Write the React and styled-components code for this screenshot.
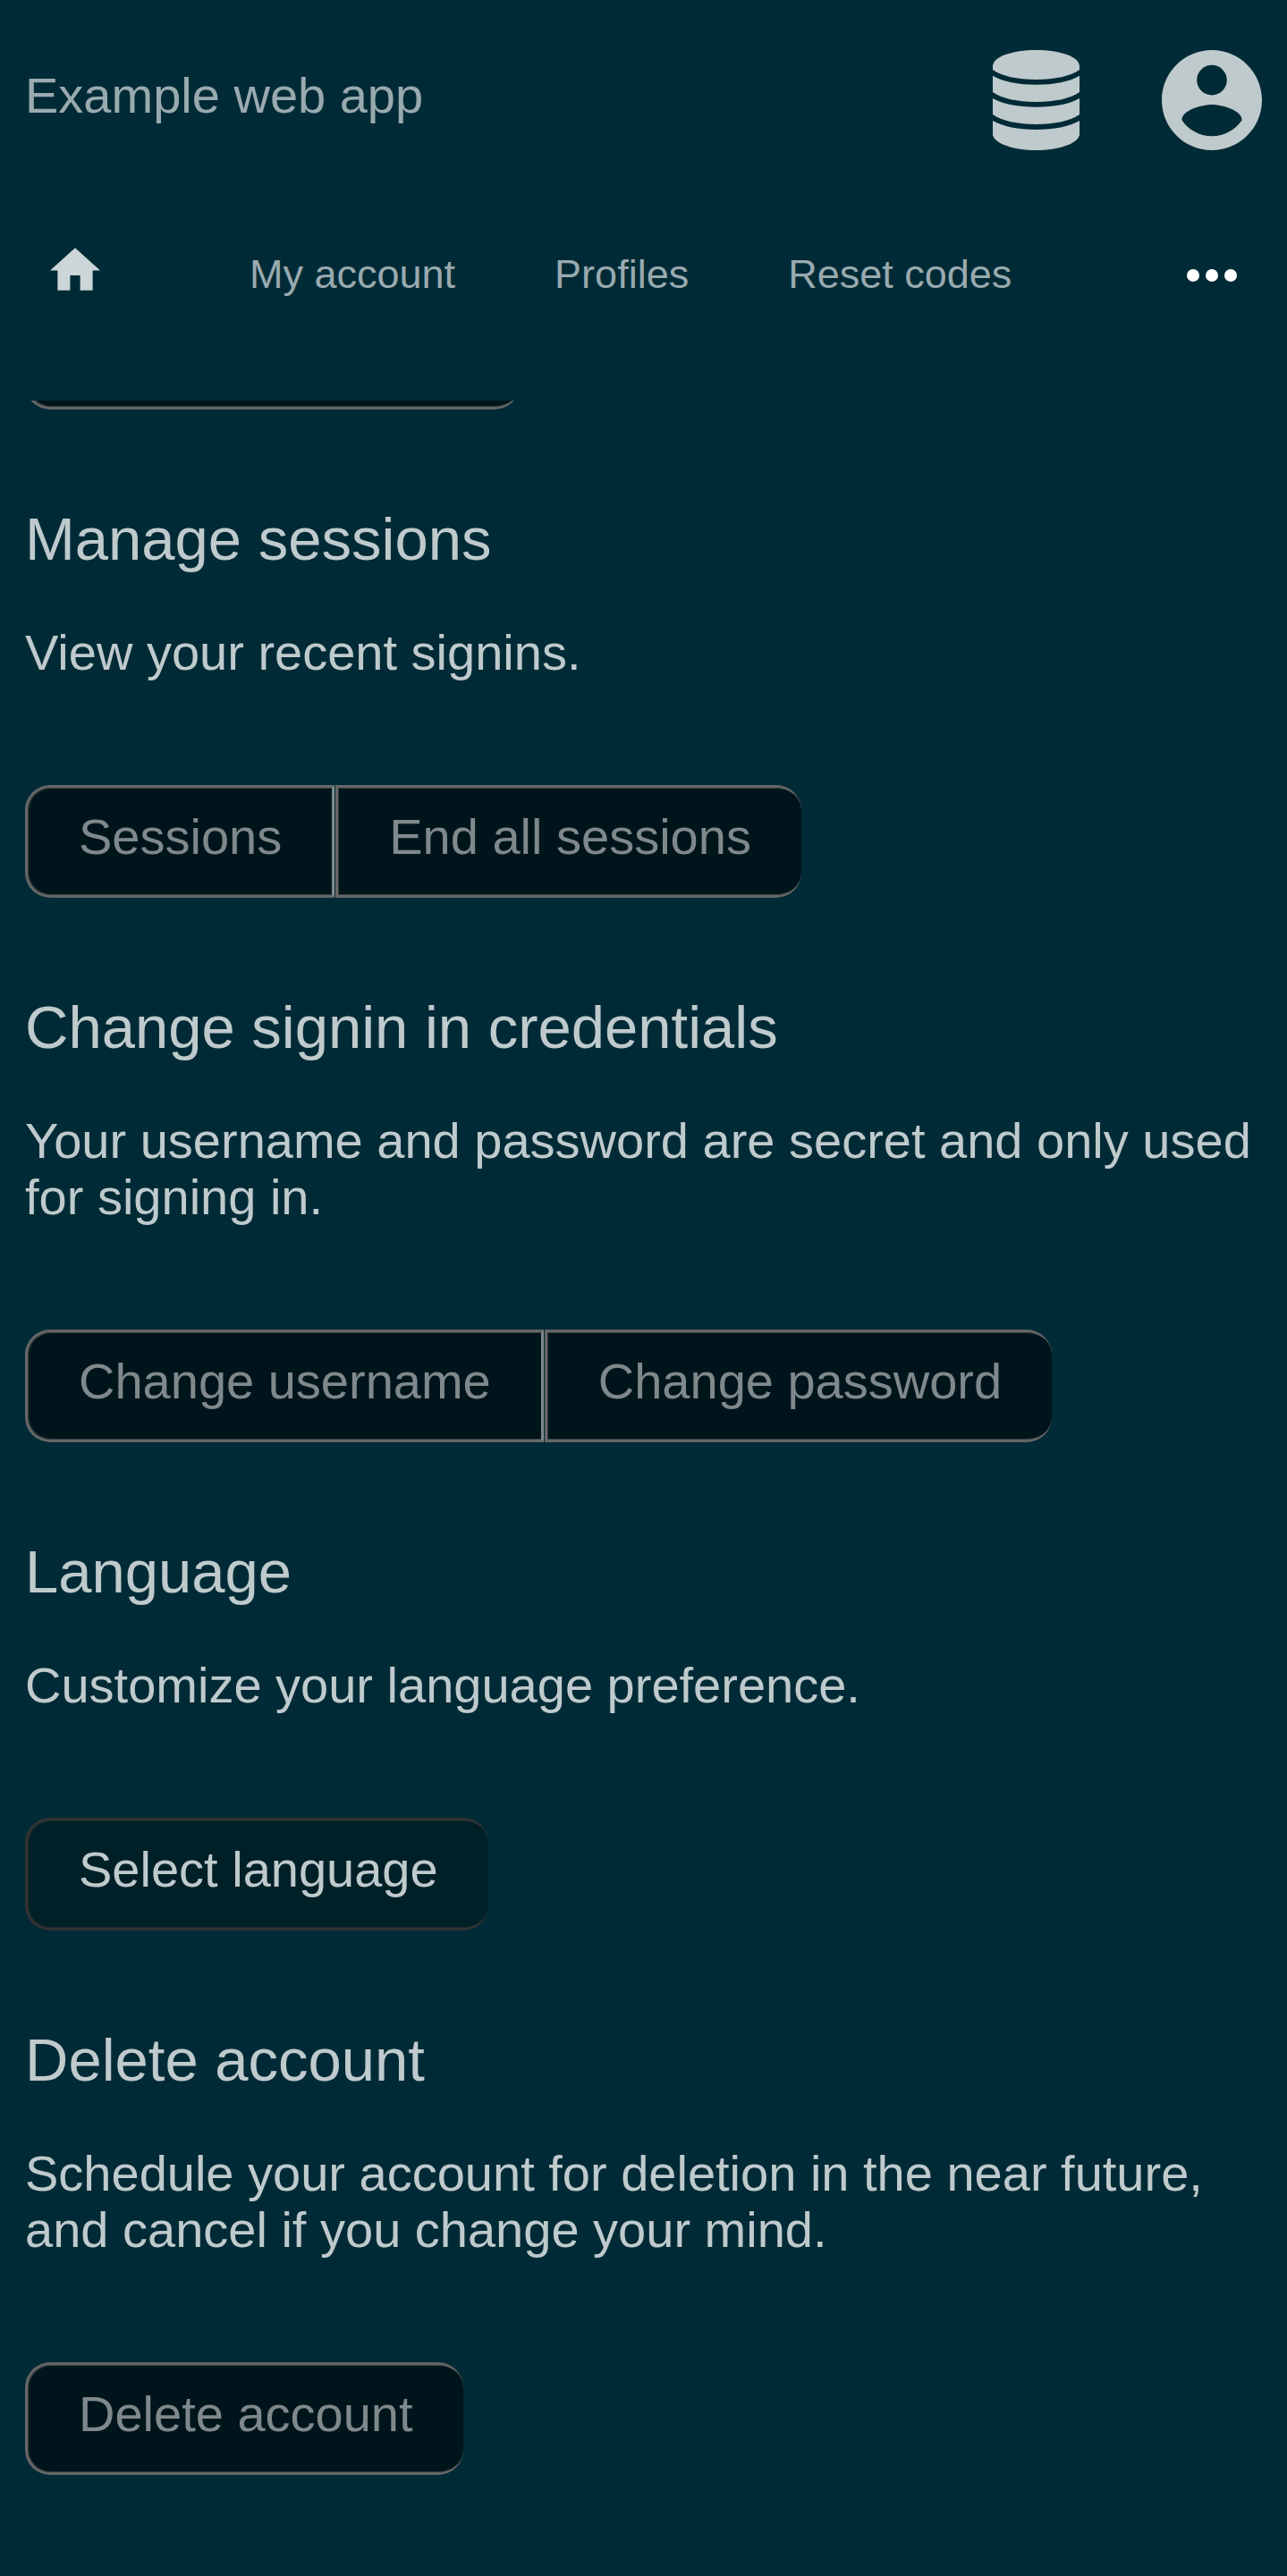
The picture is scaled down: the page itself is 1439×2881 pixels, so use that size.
import React from "react";
import styled, { createGlobalStyle } from "styled-components";

const GlobalStyle = createGlobalStyle`
  *, *::before, *::after { box-sizing: border-box; }
  body {
    margin: 0;
    background: #002b36;
    color: #bfcacd;
    font-family: "Liberation Sans", Arial, sans-serif;
    font-size: 56px;
    line-height: 63px;
  }
`;

const Page = styled.div`
  display: flex;
  flex-direction: column;
  padding-bottom: 113px;
`;

const Header = styled.header`
  display: flex;
  align-items: center;
  justify-content: space-between;
  padding: 56px 28px;
`;

const Brand = styled.a`
  color: #99aaaf;
  text-decoration: none;
  padding-bottom: 12px;
`;

const Actions = styled.div`
  display: flex;
  gap: 92px;
`;

const IconButton = styled.button`
  display: flex;
  padding: 0;
  border: 0;
  background: none;
  color: ${(p) => p.$color || "#bfcacd"};
  cursor: pointer;
`;

const Nav = styled.nav`
  display: flex;
  align-items: center;
  justify-content: space-between;
  height: 168px;
  padding: 0 56px;
  font-size: 45px;
`;

const NavItems = styled.div`
  display: flex;
  align-items: center;
  gap: 111px;
`;

const HomeLink = styled.a`
  display: flex;
  margin-right: 56px;
  padding-bottom: 14px;
  color: #ccd5d7;
`;

const NavLink = styled.a`
  padding-bottom: 3px;
  color: #99aaaf;
  text-decoration: none;
  white-space: nowrap;
`;

const Main = styled.main`
  margin-top: 56px;
  padding: 0 28px;
`;

const ScrolledRow = styled.div`
  display: flex;
  align-items: flex-end;
  height: 10px;
  overflow: hidden;
`;

const Section = styled.section`
  padding-top: 107px;
`;

const Title = styled.h2`
  margin: 0 0 57px;
  font-size: 67px;
  line-height: 76px;
  font-weight: 400;
`;

const Text = styled.p`
  margin: 0 0 117px;
`;

const ButtonGroup = styled.div`
  display: flex;
  gap: 1px;
`;

const Button = styled.button`
  flex: none;
  min-width: ${(p) => (p.$wide ? "553px" : "0")};
  height: 126px;
  padding: 23px 56px 34px 57px;
  border: 3px solid ${(p) => (p.disabled ? "#666666" : "#333333")};
  border-right: 0;
  border-radius: 0;
  background: ${(p) => (p.disabled ? "#00151b" : "#002028")};
  box-shadow: inset 1px 1px 0 ${(p) => (p.disabled ? "#333e41" : "#1a2a2e")},
    inset 1px -1px 0 ${(p) => (p.disabled ? "#333e41" : "#1a2a2e")};
  color: ${(p) => (p.disabled ? "#7f898c" : "#bfcacd")};
  font: inherit;
  white-space: nowrap;

  &:first-child {
    border-top-left-radius: 28px;
    border-bottom-left-radius: 28px;
  }
  &:last-child {
    border-top-right-radius: 28px;
    border-bottom-right-radius: 28px;
  }
  &:not(:last-child) {
    border-right: 3px solid #7f898c;
  }
`;

const DatabaseIcon = () => (
  <svg width="97" height="112" viewBox="0 0 291 336" fill="currentColor" aria-hidden="true">
    <path d="M0 55C0 22 65 0 145.500 0S291 22 291 55V66C262 87 208 99 145.500 99S29 87 0 66Z" />
    <path d="M0 86C34 106 85 116 145.500 116S257 106 291 86V141C262 162 208 174 145.500 174S29 162 0 141Z" />
    <path d="M0 162C34 182 85 191 145.500 191S257 182 291 162V216C262 237 208 249 145.500 249S29 237 0 216Z" />
    <path d="M0 237C34 257 85 267 145.500 267S257 257 291 237V285C284 314 222 336 145.500 336S7 314 0 285Z" />
  </svg>
);

const AccountIcon = () => (
  <svg width="112" height="112" viewBox="2 2 20 20" fill="currentColor" aria-hidden="true">
    <path d="M12 2C6.480 2 2 6.480 2 12s4.480 10 10 10 10-4.480 10-10S17.520 2 12 2zm0 3c1.660 0 3 1.340 3 3s-1.340 3-3 3-3-1.340-3-3 1.340-3 3-3zm0 14.200c-2.500 0-4.710-1.280-6-3.220.030-1.990 4-3.080 6-3.080 1.990 0 5.970 1.090 6 3.080-1.290 1.940-3.500 3.220-6 3.220z" />
  </svg>
);

const HomeIcon = () => (
  <svg width="56" height="48" viewBox="2 3 20 17" fill="currentColor" aria-hidden="true">
    <path d="M10 20v-6h4v6h5v-8h3L12 3 2 12h3v8z" />
  </svg>
);

const MoreIcon = () => (
  <svg width="56" height="14" viewBox="0 0 56 14" fill="currentColor" aria-hidden="true">
    <circle cx="7" cy="7" r="7" />
    <circle cx="28" cy="7" r="7" />
    <circle cx="49" cy="7" r="7" />
  </svg>
);

const navItems = ["My account", "Profiles", "Reset codes"];

const sections = [
  {
    title: "Manage sessions",
    text: "View your recent signins.",
    buttons: [
      { label: "Sessions", disabled: true },
      { label: "End all sessions", disabled: true },
    ],
  },
  {
    title: "Change signin in credentials",
    text: "Your username and password are secret and only used for signing in.",
    buttons: [
      { label: "Change username", disabled: true },
      { label: "Change password", disabled: true },
    ],
  },
  {
    title: "Language",
    text: "Customize your language preference.",
    buttons: [{ label: "Select language", disabled: false }],
  },
  {
    title: "Delete account",
    text: "Schedule your account for deletion in the near future, and cancel if you change your mind.",
    buttons: [{ label: "Delete account", disabled: true }],
  },
];

export default function App() {
  return (
    <>
      <GlobalStyle />
      <Page>
        <Header>
          <Brand href="#">Example web app</Brand>
          <Actions>
            <IconButton type="button" aria-label="Storage">
              <DatabaseIcon />
            </IconButton>
            <IconButton type="button" aria-label="Account">
              <AccountIcon />
            </IconButton>
          </Actions>
        </Header>
        <Nav>
          <NavItems>
            <HomeLink href="#" aria-label="Home">
              <HomeIcon />
            </HomeLink>
            {navItems.map((item) => (
              <NavLink href="#" key={item}>
                {item}
              </NavLink>
            ))}
          </NavItems>
          <IconButton type="button" aria-label="More" $color="#ffffff">
            <MoreIcon />
          </IconButton>
        </Nav>
        <Main>
          <ScrolledRow>
            <Button type="button" disabled $wide aria-label="Account settings" />
          </ScrolledRow>
          {sections.map((section) => (
            <Section key={section.title}>
              <Title>{section.title}</Title>
              <Text>{section.text}</Text>
              <ButtonGroup>
                {section.buttons.map((button) => (
                  <Button type="button" key={button.label} disabled={button.disabled}>
                    {button.label}
                  </Button>
                ))}
              </ButtonGroup>
            </Section>
          ))}
        </Main>
      </Page>
    </>
  );
}
